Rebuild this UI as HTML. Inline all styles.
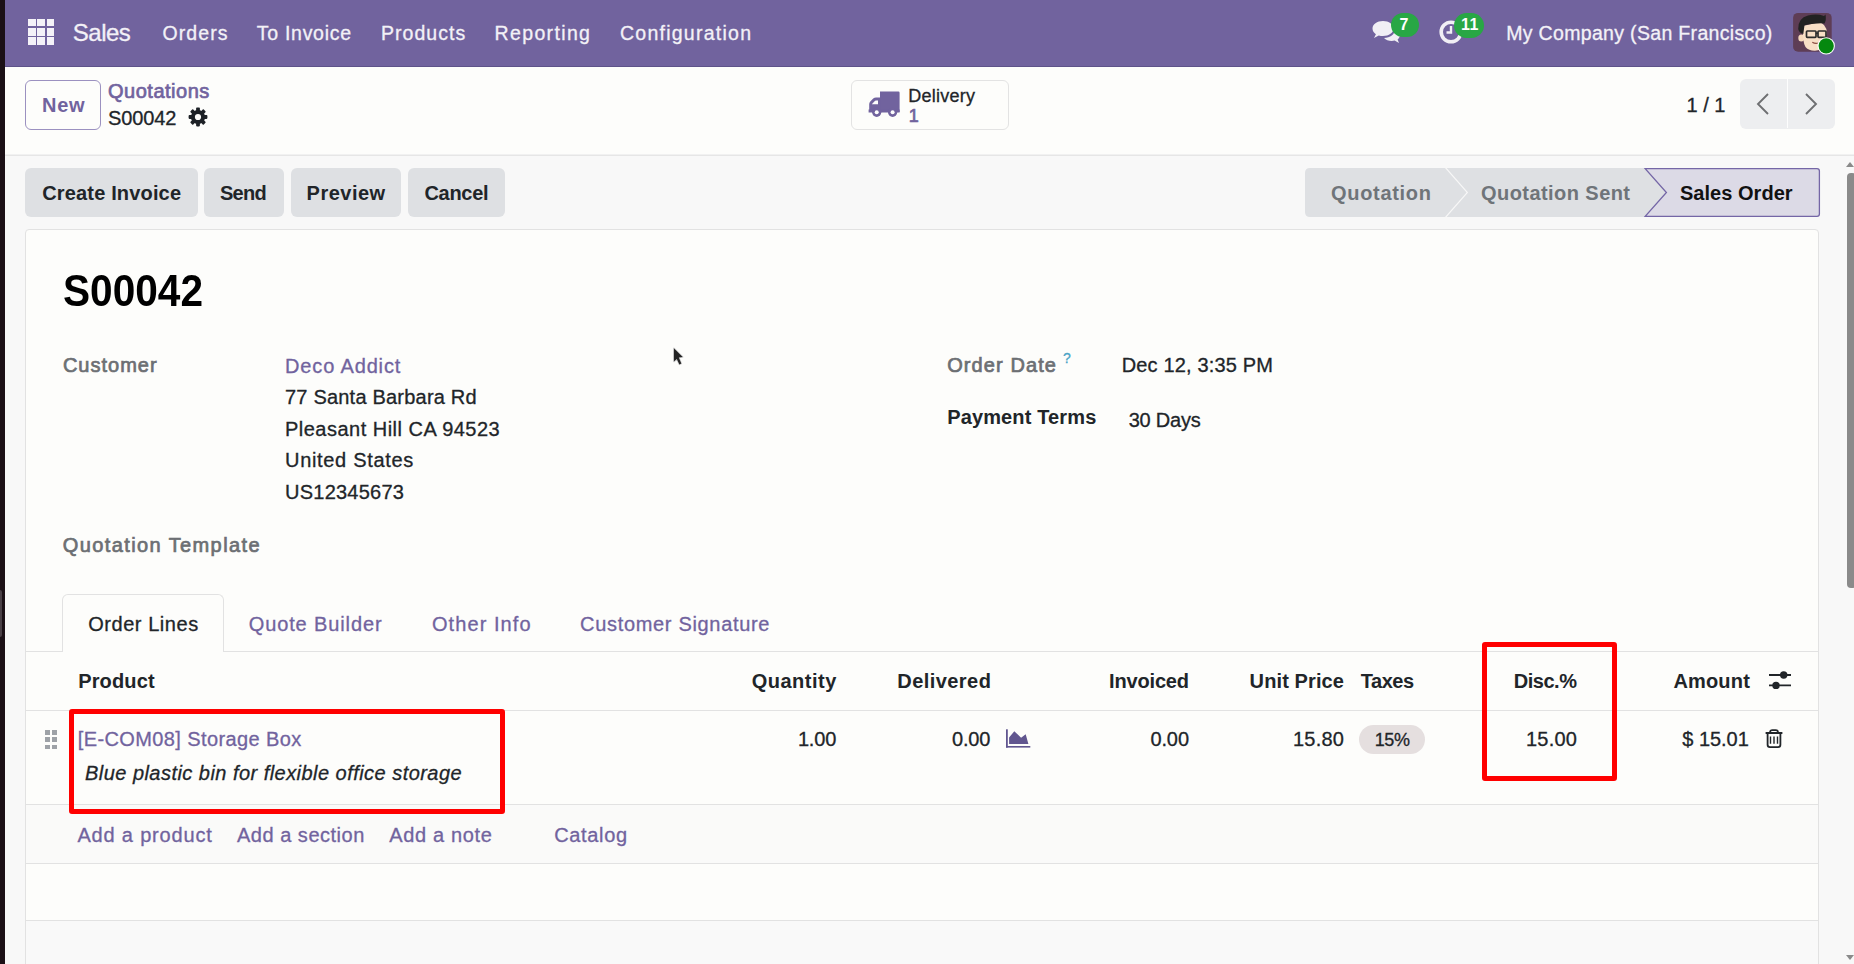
<!DOCTYPE html>
<html><head><meta charset="utf-8"><style>
html,body{margin:0;padding:0;width:1854px;height:964px;overflow:hidden;background:#f8f8f8}
body{position:relative;font-family:"Liberation Sans",sans-serif}
.t{position:absolute;white-space:nowrap;line-height:1}

</style></head><body>
<div style="position:absolute;left:0px;top:0px;width:1854px;height:964px;background:#f8f8f8"></div>
<div style="position:absolute;left:0px;top:0px;width:1854px;height:66px;background:#71639e"></div>
<div style="position:absolute;left:0px;top:66px;width:1854px;height:1px;background:#5e5389"></div>
<div style="position:absolute;left:0px;top:67px;width:1854px;height:87px;background:#fdfdfb"></div>
<div style="position:absolute;left:0px;top:154px;width:1854px;height:1px;background:#f1f1f1"></div>
<div style="position:absolute;left:0px;top:155px;width:1854px;height:1px;background:#e6e6e6"></div>
<div style="position:absolute;left:25px;top:229px;width:1794px;height:760px;background:#fdfdfb;border:1px solid #e2e2e2;border-radius:4px;box-sizing:border-box"></div>
<div style="position:absolute;left:0px;top:0px;width:5px;height:964px;background:#1b1016"></div>
<div style="position:absolute;left:0px;top:590px;width:2px;height:47px;background:#4a4046;border-radius:0 2px 2px 0"></div>
<div style="position:absolute;left:28.0px;top:19.0px;width:7.6px;height:7.4px;background:#f4f2f8"></div>
<div style="position:absolute;left:37.3px;top:19.0px;width:7.6px;height:7.4px;background:#f4f2f8"></div>
<div style="position:absolute;left:46.6px;top:19.0px;width:7.6px;height:7.4px;background:#f4f2f8"></div>
<div style="position:absolute;left:28.0px;top:28.2px;width:7.6px;height:7.4px;background:#f4f2f8"></div>
<div style="position:absolute;left:37.3px;top:28.2px;width:7.6px;height:7.4px;background:#f4f2f8"></div>
<div style="position:absolute;left:46.6px;top:28.2px;width:7.6px;height:7.4px;background:#f4f2f8"></div>
<div style="position:absolute;left:28.0px;top:37.4px;width:7.6px;height:7.4px;background:#f4f2f8"></div>
<div style="position:absolute;left:37.3px;top:37.4px;width:7.6px;height:7.4px;background:#f4f2f8"></div>
<div style="position:absolute;left:46.6px;top:37.4px;width:7.6px;height:7.4px;background:#f4f2f8"></div>
<div class="t" style="left:72.80px;top:20.68px;font-size:24px;font-weight:400;font-style:normal;color:#f3f1f7;letter-spacing:-0.500px;-webkit-text-stroke:0.3px #f3f1f7;">Sales</div>
<div class="t" style="left:162.50px;top:24.09px;font-size:19.5px;font-weight:400;font-style:normal;color:#f3f1f7;letter-spacing:1.080px;-webkit-text-stroke:0.3px #f3f1f7;">Orders</div>
<div class="t" style="left:256.80px;top:24.09px;font-size:19.5px;font-weight:400;font-style:normal;color:#f3f1f7;letter-spacing:0.711px;-webkit-text-stroke:0.3px #f3f1f7;">To Invoice</div>
<div class="t" style="left:381.00px;top:24.09px;font-size:19.5px;font-weight:400;font-style:normal;color:#f3f1f7;letter-spacing:1.029px;-webkit-text-stroke:0.3px #f3f1f7;">Products</div>
<div class="t" style="left:494.60px;top:24.09px;font-size:19.5px;font-weight:400;font-style:normal;color:#f3f1f7;letter-spacing:1.350px;-webkit-text-stroke:0.3px #f3f1f7;">Reporting</div>
<div class="t" style="left:620.00px;top:24.09px;font-size:19.5px;font-weight:400;font-style:normal;color:#f3f1f7;letter-spacing:1.250px;-webkit-text-stroke:0.3px #f3f1f7;">Configuration</div>
<div class="t" style="left:1506.20px;top:24.09px;font-size:19.5px;font-weight:400;font-style:normal;color:#f3f1f7;letter-spacing:0.328px;-webkit-text-stroke:0.3px #f3f1f7;">My Company (San Francisco)</div>
<svg style="position:absolute;left:1372px;top:20px" width="28" height="24" viewBox="0 0 28 24">
<path d="M11 1C5 1 0.5 4.3 0.5 8.5c0 2.3 1.3 4.3 3.4 5.7L2 18l4.8-2.6c1.3.4 2.7.6 4.2.6 6 0 10.5-3.3 10.5-7.5S17 1 11 1z" fill="#f1eff5"/>
<path d="M23 9.5c0 4.6-4.8 8.3-11 8.6 1.8 1.8 4.6 2.9 7.7 2.9 1 0 2-.1 2.9-.4L27 23l-1.4-3.6c1.5-1.1 2.4-2.6 2.4-4.3 0-2.2-1.9-4.2-4.8-5.3z" fill="#f1eff5"/>
</svg>
<div style="position:absolute;left:1390.5px;top:12.5px;width:28.5px;height:24.5px;background:#28a745;border-radius:12px"></div>
<div class="t" style="left:1399.50px;top:17.46px;font-size:16px;font-weight:700;font-style:normal;color:#fff;letter-spacing:0.000px;">7</div>
<svg style="position:absolute;left:1439px;top:20px" width="24" height="24" viewBox="0 0 24 24">
<circle cx="12" cy="12" r="9.8" fill="none" stroke="#f1eff5" stroke-width="3.6"/>
<path d="M12 6v6.5H7.5" fill="none" stroke="#f1eff5" stroke-width="2.4"/>
</svg>
<div style="position:absolute;left:1454px;top:12.5px;width:30px;height:25px;background:#28a745;border-radius:12.5px"></div>
<div class="t" style="left:1461.00px;top:17.46px;font-size:16px;font-weight:700;font-style:normal;color:#fff;letter-spacing:0.000px;">1</div>
<div class="t" style="left:1469.50px;top:17.46px;font-size:16px;font-weight:700;font-style:normal;color:#fff;letter-spacing:0.000px;">1</div>
<svg style="position:absolute;left:1788px;top:8px" width="52" height="52" viewBox="0 0 52 52">
<rect x="5.1" y="4.9" width="38.6" height="38.8" rx="5" fill="#5e3d55"/>
<ellipse cx="13.3" cy="30" rx="3" ry="3.6" fill="#f6d9bd"/>
<path d="M14.8 18Q14.3 34 17.5 39Q21 43 27 42.8Q33.5 42.3 36.5 36.5L38.8 25Q38.5 15 30 14.5Z" fill="#f8dfc6"/>
<path d="M10.2 21Q10 10 20 7.5Q29 5.5 36 8L37.5 6.5Q38.6 12 36.4 15.5Q30 14.8 16.5 17.2L15.3 26Q11 25 10.2 21Z" fill="#222"/>
<rect x="18.5" y="23" width="9.5" height="6.3" rx="0.8" fill="none" stroke="#2c2c2c" stroke-width="1.7"/>
<rect x="30" y="23" width="8" height="6.3" rx="0.8" fill="none" stroke="#2c2c2c" stroke-width="1.7"/>
<path d="M28 25.3H30" stroke="#2c2c2c" stroke-width="1.4"/>
<path d="M24.3 34.2Q27.5 36.3 31 34.8" fill="none" stroke="#8d4f45" stroke-width="1.2"/>
<circle cx="38.2" cy="37.9" r="8.7" fill="#fff"/><circle cx="38.2" cy="37.9" r="7.6" fill="#05880f"/>
</svg>
<div style="position:absolute;left:25px;top:80px;width:76px;height:50px;border:1.5px solid #9b91c0;border-radius:6px;box-sizing:border-box"></div>
<div class="t" style="left:42.10px;top:95.27px;font-size:20px;font-weight:700;font-style:normal;color:#71639e;letter-spacing:0.700px;">New</div>
<div class="t" style="left:108.00px;top:81.27px;font-size:20px;font-weight:400;font-style:normal;color:#71639e;letter-spacing:0.511px;-webkit-text-stroke:0.7px #71639e;">Quotations</div>
<div class="t" style="left:108.00px;top:107.67px;font-size:20px;font-weight:400;font-style:normal;color:#212529;letter-spacing:-0.120px;-webkit-text-stroke:0.3px #212529;">S00042</div>
<svg style="position:absolute;left:187.6px;top:106.8px" width="20" height="20" viewBox="0 0 20 20">
<mask id="gm"><rect width="20" height="20" fill="#fff"/><circle cx="10" cy="10" r="3.1" fill="#000"/></mask>
<g fill="#1d2126" mask="url(#gm)"><circle cx="10" cy="10" r="7.1"/><rect x="8.1" y="0.6" width="3.8" height="5" rx="0.8" transform="rotate(0 10 10)"/><rect x="8.1" y="0.6" width="3.8" height="5" rx="0.8" transform="rotate(45 10 10)"/><rect x="8.1" y="0.6" width="3.8" height="5" rx="0.8" transform="rotate(90 10 10)"/><rect x="8.1" y="0.6" width="3.8" height="5" rx="0.8" transform="rotate(135 10 10)"/><rect x="8.1" y="0.6" width="3.8" height="5" rx="0.8" transform="rotate(180 10 10)"/><rect x="8.1" y="0.6" width="3.8" height="5" rx="0.8" transform="rotate(225 10 10)"/><rect x="8.1" y="0.6" width="3.8" height="5" rx="0.8" transform="rotate(270 10 10)"/><rect x="8.1" y="0.6" width="3.8" height="5" rx="0.8" transform="rotate(315 10 10)"/></g></svg>
<div style="position:absolute;left:851px;top:80px;width:158px;height:50px;border:1px solid #e3e3e3;border-radius:6px;box-sizing:border-box"></div>
<svg style="position:absolute;left:868px;top:90px" width="33" height="28" viewBox="0 0 33 28">
<path fill="#71639e" d="M12 1.6H30.5Q31.6 1.6 31.6 2.7V22H12Z"/>
<path fill="#71639e" d="M1.2 22V14.2Q1.2 12.6 2.3 11.5L5.2 8.6Q6.4 7.4 8 7.4H12.5V22Z"/>
<path fill="#fdfdfd" d="M3.8 14.2L6.6 11.2Q7.1 10.6 8 10.6H10V14.2Z"/>
<rect x="0.6" y="19.5" width="31" height="3" fill="#71639e"/>
<circle cx="8.7" cy="22.3" r="4.6" fill="#71639e"/><circle cx="8.7" cy="22.3" r="2" fill="#fdfdfd"/>
<circle cx="24.6" cy="22.3" r="4.6" fill="#71639e"/><circle cx="24.6" cy="22.3" r="2" fill="#fdfdfd"/>
</svg>
<div class="t" style="left:908.30px;top:86.76px;font-size:18px;font-weight:400;font-style:normal;color:#212529;letter-spacing:0.243px;-webkit-text-stroke:0.3px #212529;">Delivery</div>
<div class="t" style="left:908.70px;top:107.16px;font-size:18px;font-weight:400;font-style:normal;color:#71639e;letter-spacing:0.000px;-webkit-text-stroke:0.7px #71639e;">1</div>
<div class="t" style="left:1686.50px;top:95.37px;font-size:20px;font-weight:400;font-style:normal;color:#212529;letter-spacing:0.000px;-webkit-text-stroke:0.3px #212529;">1 / 1</div>
<div style="position:absolute;left:1739.5px;top:79px;width:95.5px;height:49.5px;background:#edeef0;border-radius:6px"></div>
<div style="position:absolute;left:1786.5px;top:79px;width:1px;height:49px;background:#fdfdfd"></div>
<svg style="position:absolute;left:1754px;top:92px" width="18" height="24" viewBox="0 0 18 24"><path d="M14 2L4 12l10 10" fill="none" stroke="#6e6f72" stroke-width="1.9"/></svg>
<svg style="position:absolute;left:1802px;top:92px" width="18" height="24" viewBox="0 0 18 24"><path d="M4 2l10 10L4 22" fill="none" stroke="#6e6f72" stroke-width="1.9"/></svg>
<div style="position:absolute;left:25px;top:168px;width:173px;height:49px;background:#dee0e3;border-radius:6px"></div>
<div style="position:absolute;left:204px;top:168px;width:80px;height:49px;background:#dee0e3;border-radius:6px"></div>
<div style="position:absolute;left:290.5px;top:168px;width:110.5px;height:49px;background:#dee0e3;border-radius:6px"></div>
<div style="position:absolute;left:408px;top:168px;width:97px;height:49px;background:#dee0e3;border-radius:6px"></div>
<div class="t" style="left:42.20px;top:182.67px;font-size:20px;font-weight:700;font-style:normal;color:#212529;letter-spacing:0.162px;">Create Invoice</div>
<div class="t" style="left:219.90px;top:182.67px;font-size:20px;font-weight:700;font-style:normal;color:#212529;letter-spacing:-0.667px;">Send</div>
<div class="t" style="left:306.60px;top:182.67px;font-size:20px;font-weight:700;font-style:normal;color:#212529;letter-spacing:0.483px;">Preview</div>
<div class="t" style="left:424.50px;top:182.67px;font-size:20px;font-weight:700;font-style:normal;color:#212529;letter-spacing:-0.320px;">Cancel</div>
<svg style="position:absolute;left:1304px;top:167px" width="517" height="51" viewBox="1304 167 517 51">
<path d="M1310 168H1445L1466.5 192.5L1445 217H1310Q1305 217 1305 212V173Q1305 168 1310 168Z" fill="#dee0e3"/>
<path d="M1446.6 168H1646L1667 192.5L1646 217H1446.6L1468.1 192.5Z" fill="#dee0e3"/>
<path d="M1645.2 168.6H1817Q1819.4 168.6 1819.4 171V214Q1819.4 216.4 1817 216.4H1645.2L1666.4 192.5Z" fill="#dcdae6" stroke="#7466a6" stroke-width="1.3"/>
</svg>
<div class="t" style="left:1331.00px;top:183.27px;font-size:20px;font-weight:700;font-style:normal;color:#6f7479;letter-spacing:0.688px;">Quotation</div>
<div class="t" style="left:1481.00px;top:183.27px;font-size:20px;font-weight:700;font-style:normal;color:#6f7479;letter-spacing:0.438px;">Quotation Sent</div>
<div class="t" style="left:1680.00px;top:183.27px;font-size:20px;font-weight:700;font-style:normal;color:#111;letter-spacing:0.030px;">Sales Order</div>
<div style="position:absolute;left:1843px;top:156px;width:11px;height:808px;background:#f8f8f8"></div>
<svg style="position:absolute;left:1846px;top:160px" width="8" height="8" viewBox="0 0 8 8"><path d="M0 7L4 2L8 7Z" fill="#8a8a8a"/></svg>
<div style="position:absolute;left:1847px;top:173px;width:9px;height:415px;background:#8a8a8a;border-radius:4px"></div>
<svg style="position:absolute;left:1846px;top:954px" width="8" height="8" viewBox="0 0 8 8"><path d="M0 1L4 6L8 1Z" fill="#8a8a8a"/></svg>
<div class="t" style="left:62.90px;top:269.05px;font-size:44px;font-weight:700;font-style:normal;color:#000;transform:scaleX(0.9229);transform-origin:0 0;">S00042</div>
<div class="t" style="left:62.90px;top:355.27px;font-size:20px;font-weight:400;font-style:normal;color:#6c6f73;letter-spacing:1.000px;-webkit-text-stroke:0.7px #6c6f73;">Customer</div>
<div class="t" style="left:285.00px;top:356.27px;font-size:20px;font-weight:400;font-style:normal;color:#71639e;letter-spacing:0.860px;-webkit-text-stroke:0.3px #71639e;">Deco Addict</div>
<div class="t" style="left:285.00px;top:386.77px;font-size:20px;font-weight:400;font-style:normal;color:#212529;letter-spacing:0.206px;-webkit-text-stroke:0.3px #212529;">77 Santa Barbara Rd</div>
<div class="t" style="left:285.00px;top:419.17px;font-size:20px;font-weight:400;font-style:normal;color:#212529;letter-spacing:0.481px;-webkit-text-stroke:0.3px #212529;">Pleasant Hill CA 94523</div>
<div class="t" style="left:285.00px;top:450.07px;font-size:20px;font-weight:400;font-style:normal;color:#212529;letter-spacing:0.683px;-webkit-text-stroke:0.3px #212529;">United States</div>
<div class="t" style="left:285.00px;top:482.47px;font-size:20px;font-weight:400;font-style:normal;color:#212529;letter-spacing:0.244px;-webkit-text-stroke:0.3px #212529;">US12345673</div>
<div class="t" style="left:62.75px;top:534.57px;font-size:20px;font-weight:400;font-style:normal;color:#6c6f73;letter-spacing:1.397px;-webkit-text-stroke:0.7px #6c6f73;">Quotation Template</div>
<div class="t" style="left:947.20px;top:355.07px;font-size:20px;font-weight:400;font-style:normal;color:#6c6f73;letter-spacing:1.089px;-webkit-text-stroke:0.7px #6c6f73;">Order Date</div>
<div class="t" style="left:1063.00px;top:350.65px;font-size:14px;font-weight:400;font-style:normal;color:#4aa3c6;letter-spacing:0.000px;-webkit-text-stroke:0.3px #4aa3c6;">?</div>
<div class="t" style="left:1121.70px;top:355.07px;font-size:20px;font-weight:400;font-style:normal;color:#212529;letter-spacing:0.164px;-webkit-text-stroke:0.3px #212529;">Dec 12, 3:35 PM</div>
<div class="t" style="left:947.20px;top:406.87px;font-size:20px;font-weight:700;font-style:normal;color:#212529;letter-spacing:0.133px;">Payment Terms</div>
<div class="t" style="left:1128.70px;top:409.57px;font-size:20px;font-weight:400;font-style:normal;color:#212529;letter-spacing:-0.233px;-webkit-text-stroke:0.3px #212529;">30 Days</div>
<svg style="position:absolute;left:672px;top:346px" width="16" height="22" viewBox="0 0 16 22">
<path d="M1.9 2.3V15.6L4.8 12.9L7.4 18.4L9.3 17.6L6.8 11.6L10.7 11.1Z" fill="#232323" stroke="#cfcfcf" stroke-width="1.5" stroke-linejoin="round" paint-order="stroke"/></svg>
<div style="position:absolute;left:25px;top:651px;width:1794px;height:1px;background:#e2e2e2"></div>
<div style="position:absolute;left:62px;top:594px;width:162px;height:58px;background:#fdfdfb;border:1px solid #e2e2e2;border-bottom:none;border-radius:6px 6px 0 0;box-sizing:border-box"></div>
<div class="t" style="left:88.20px;top:614.07px;font-size:20px;font-weight:400;font-style:normal;color:#212529;letter-spacing:0.550px;-webkit-text-stroke:0.3px #212529;">Order Lines</div>
<div class="t" style="left:248.70px;top:614.07px;font-size:20px;font-weight:400;font-style:normal;color:#71639e;letter-spacing:0.883px;-webkit-text-stroke:0.3px #71639e;">Quote Builder</div>
<div class="t" style="left:432.00px;top:614.07px;font-size:20px;font-weight:400;font-style:normal;color:#71639e;letter-spacing:1.067px;-webkit-text-stroke:0.3px #71639e;">Other Info</div>
<div class="t" style="left:580.10px;top:614.07px;font-size:20px;font-weight:400;font-style:normal;color:#71639e;letter-spacing:0.676px;-webkit-text-stroke:0.3px #71639e;">Customer Signature</div>
<div style="position:absolute;left:25px;top:710px;width:1794px;height:1px;background:#e2e2e2"></div>
<div class="t" style="left:78.25px;top:671.07px;font-size:20px;font-weight:700;font-style:normal;color:#212529;letter-spacing:0.125px;">Product</div>
<div class="t" style="left:751.70px;top:671.07px;font-size:20px;font-weight:700;font-style:normal;color:#212529;letter-spacing:0.500px;">Quantity</div>
<div class="t" style="left:897.30px;top:671.07px;font-size:20px;font-weight:700;font-style:normal;color:#212529;letter-spacing:0.438px;">Delivered</div>
<div class="t" style="left:1109.00px;top:671.07px;font-size:20px;font-weight:700;font-style:normal;color:#212529;letter-spacing:-0.157px;">Invoiced</div>
<div class="t" style="left:1249.60px;top:671.07px;font-size:20px;font-weight:700;font-style:normal;color:#212529;letter-spacing:0.111px;">Unit Price</div>
<div class="t" style="left:1360.80px;top:671.07px;font-size:20px;font-weight:700;font-style:normal;color:#212529;letter-spacing:-0.475px;">Taxes</div>
<div class="t" style="left:1513.80px;top:671.07px;font-size:20px;font-weight:700;font-style:normal;color:#212529;letter-spacing:-0.480px;">Disc.%</div>
<div class="t" style="left:1673.40px;top:671.07px;font-size:20px;font-weight:700;font-style:normal;color:#212529;letter-spacing:0.180px;">Amount</div>
<svg style="position:absolute;left:1768px;top:670px" width="24" height="20" viewBox="0 0 24 20">
<path d="M1 5H23M1 15.4H23" stroke="#212529" stroke-width="1.8"/>
<circle cx="15.7" cy="5" r="3.7" fill="#212529"/><circle cx="8" cy="15.4" r="3.7" fill="#212529"/></svg>
<div style="position:absolute;left:45.0px;top:730.0px;width:4.7px;height:4.7px;background:#9ea2a7"></div>
<div style="position:absolute;left:52.2px;top:730.0px;width:4.7px;height:4.7px;background:#9ea2a7"></div>
<div style="position:absolute;left:45.0px;top:737.4px;width:4.7px;height:4.7px;background:#9ea2a7"></div>
<div style="position:absolute;left:52.2px;top:737.4px;width:4.7px;height:4.7px;background:#9ea2a7"></div>
<div style="position:absolute;left:45.0px;top:744.8px;width:4.7px;height:4.7px;background:#9ea2a7"></div>
<div style="position:absolute;left:52.2px;top:744.8px;width:4.7px;height:4.7px;background:#9ea2a7"></div>
<div class="t" style="left:77.80px;top:729.07px;font-size:20px;font-weight:400;font-style:normal;color:#71639e;letter-spacing:0.385px;-webkit-text-stroke:0.3px #71639e;">[E-COM08] Storage Box</div>
<div class="t" style="left:85.00px;top:763.07px;font-size:20px;font-weight:400;font-style:italic;color:#212529;letter-spacing:0.460px;-webkit-text-stroke:0.3px #212529;">Blue plastic bin for flexible office storage</div>
<div class="t" style="left:797.90px;top:729.37px;font-size:20px;font-weight:400;font-style:normal;color:#212529;letter-spacing:-0.167px;-webkit-text-stroke:0.3px #212529;">1.00</div>
<div class="t" style="left:952.00px;top:729.37px;font-size:20px;font-weight:400;font-style:normal;color:#212529;letter-spacing:-0.200px;-webkit-text-stroke:0.3px #212529;">0.00</div>
<svg style="position:absolute;left:1005px;top:728px" width="27" height="21" viewBox="0 0 27 21">
<rect x="1" y="1.3" width="1.8" height="18.3" fill="#61568f"/><rect x="1" y="18" width="24.3" height="1.6" fill="#61568f"/>
<path d="M4.1 16V9.4L9.3 3.2L16.1 9.8L20.7 6.3L23.4 16Z" fill="#61568f"/></svg>
<div class="t" style="left:1150.40px;top:729.37px;font-size:20px;font-weight:400;font-style:normal;color:#212529;letter-spacing:-0.100px;-webkit-text-stroke:0.3px #212529;">0.00</div>
<div class="t" style="left:1293.00px;top:729.37px;font-size:20px;font-weight:400;font-style:normal;color:#212529;letter-spacing:0.225px;-webkit-text-stroke:0.3px #212529;">15.80</div>
<div style="position:absolute;left:1359px;top:725px;width:66px;height:29px;background:#e5dfdf;border-radius:14.5px"></div>
<div class="t" style="left:1374.70px;top:731.06px;font-size:18px;font-weight:400;font-style:normal;color:#212529;letter-spacing:-0.400px;-webkit-text-stroke:0.3px #212529;">15%</div>
<div class="t" style="left:1526.00px;top:729.37px;font-size:20px;font-weight:400;font-style:normal;color:#212529;letter-spacing:0.225px;-webkit-text-stroke:0.3px #212529;">15.00</div>
<div class="t" style="left:1682.30px;top:729.37px;font-size:20px;font-weight:400;font-style:normal;color:#212529;letter-spacing:-0.033px;-webkit-text-stroke:0.3px #212529;">$ 15.01</div>
<svg style="position:absolute;left:1765px;top:729px" width="18" height="20" viewBox="0 0 18 20">
<path d="M5 3.4Q5 1.1 7.4 1.1H10.6Q13 1.1 13 3.4" fill="none" stroke="#212529" stroke-width="1.7"/>
<path d="M0.6 4H17.4" stroke="#212529" stroke-width="2"/>
<path d="M2.6 4.6V15.8Q2.6 18.1 4.9 18.1H13.1Q15.4 18.1 15.4 15.8V4.6" fill="none" stroke="#212529" stroke-width="1.8"/>
<path d="M5.5 7.5V14.8M9 7.5V14.8M12.5 7.5V14.8" stroke="#212529" stroke-width="1.4"/></svg>
<div style="position:absolute;left:25px;top:804px;width:1794px;height:1px;background:#e2e2e2"></div>
<div style="position:absolute;left:26px;top:805px;width:1792px;height:58px;background:#fafaf9"></div>
<div style="position:absolute;left:25px;top:863px;width:1794px;height:1px;background:#e2e2e2"></div>
<div style="position:absolute;left:25px;top:920px;width:1794px;height:1px;background:#e2e2e2"></div>
<div style="position:absolute;left:26px;top:921px;width:1792px;height:43px;background:#f9f9f9"></div>
<div class="t" style="left:77.40px;top:824.67px;font-size:20px;font-weight:400;font-style:normal;color:#71639e;letter-spacing:0.825px;-webkit-text-stroke:0.3px #71639e;">Add a product</div>
<div class="t" style="left:237.00px;top:824.67px;font-size:20px;font-weight:400;font-style:normal;color:#71639e;letter-spacing:0.508px;-webkit-text-stroke:0.3px #71639e;">Add a section</div>
<div class="t" style="left:389.20px;top:824.67px;font-size:20px;font-weight:400;font-style:normal;color:#71639e;letter-spacing:0.656px;-webkit-text-stroke:0.3px #71639e;">Add a note</div>
<div class="t" style="left:554.20px;top:824.67px;font-size:20px;font-weight:400;font-style:normal;color:#71639e;letter-spacing:0.650px;-webkit-text-stroke:0.3px #71639e;">Catalog</div>
<div style="position:absolute;left:69px;top:709px;width:436px;height:105px;border:5px solid #ff0000;border-radius:3px;box-sizing:border-box"></div>
<div style="position:absolute;left:1482px;top:642px;width:135px;height:139px;border:5px solid #ff0000;border-radius:3px;box-sizing:border-box"></div>
</body></html>
